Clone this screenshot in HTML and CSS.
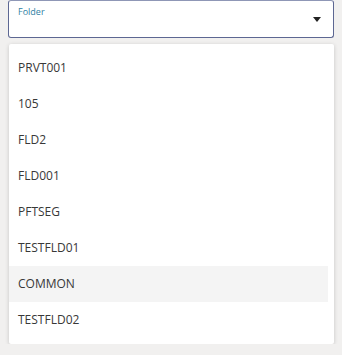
FILE: index.html
```html
<!DOCTYPE html>
<html>
<head>
<meta charset="utf-8">
<link rel="stylesheet" href="styles.css">
</head>
<body>
<div class="wrap">
  <div class="select">
    <span class="label">Folder</span>
    <span class="caret"></span>
  </div>
  <ul class="menu">
    <li>PRVT001</li>
    <li>105</li>
    <li>FLD2</li>
    <li>FLD001</li>
    <li>PFTSEG</li>
    <li>TESTFLD01</li>
    <li class="active">COMMON</li>
    <li>TESTFLD02</li>
  </ul>
</div>
</body>
</html>
```
FILE: styles.css
```css
html, body {
  margin: 0;
  padding: 0;
  background: #f1f0ef;
  font-family: "Open Sans", "Noto Sans", sans-serif;
}
.wrap {
  padding: 0 8px 0 8px;
  width: 326px;
}
.select {
  position: relative;
  box-sizing: border-box;
  height: 38px;
  border: 1px solid #5d6792;
  border-top-color: #8f97b6;
  border-radius: 3px;
  background: #fff;
}
.label {
  position: absolute;
  left: 9px;
  top: 4px;
  font-size: 9px;
  color: #2f7fa3;
}
.caret {
  position: absolute;
  left: 304px;
  top: 16px;
  width: 0;
  height: 0;
  border-left: 4px solid transparent;
  border-right: 4px solid transparent;
  border-top: 5px solid #222;
}
.menu {
  list-style: none;
  margin: 6px 0 0 1px;
  padding: 6px 6px 6px 0;
  width: 319px;
  background: #fff;
  border-radius: 2px;
  box-shadow: 0 1px 4px rgba(0,0,0,0.18);
}
.menu li {
  height: 36px;
  line-height: 36px;
  padding-left: 9px;
  font-size: 12px;
  color: #383838;
}
.menu li.active {
  background: #f4f4f4;
}
```
